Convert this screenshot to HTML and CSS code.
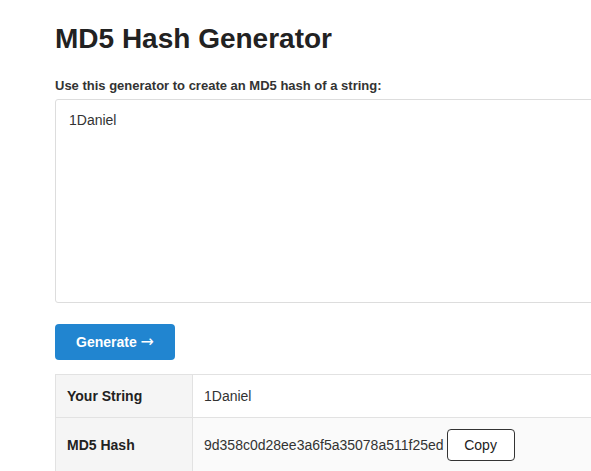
FILE: index.html
```html
<!DOCTYPE html>
<html>
<head>
<meta charset="utf-8">
<link rel="stylesheet" href="styles.css">
</head>
<body>
<div class="page">
  <h1 class="title">MD5 Hash Generator</h1>
  <label class="label" for="src">Use this generator to create an MD5 hash of a string:</label>
  <textarea id="src" class="input">1Daniel</textarea>
  <button class="generate">Generate <span class="arrow">→</span></button>
  <table class="result">
    <tr>
      <th>Your String</th>
      <td>1Daniel</td>
    </tr>
    <tr class="alt">
      <th>MD5 Hash</th>
      <td><span class="hash">9d358c0d28ee3a6f5a35078a511f25ed</span><button class="copy">Copy</button></td>
    </tr>
  </table>
</div>
</body>
</html>
```
FILE: styles.css
```css
html, body {
  margin: 0;
  padding: 0;
  background: #fff;
  overflow: hidden;
}
body {
  font-family: "Liberation Sans", Arial, sans-serif;
  color: #333;
}
.page {
  width: 700px;
  padding: 22px 0 0 55px;
}
.title {
  margin: 0;
  font-size: 28px;
  line-height: 34px;
  font-weight: bold;
  color: #222;
}
.label {
  display: block;
  margin-top: 21px;
  font-size: 13px;
  line-height: 18px;
  font-weight: bold;
  color: #333;
}
.input {
  display: block;
  box-sizing: border-box;
  width: 100%;
  height: 204px;
  margin-top: 4px;
  padding: 11px 13px;
  border: 1px solid #ddd;
  border-radius: 3px;
  font-family: "Liberation Sans", Arial, sans-serif;
  font-size: 14px;
  line-height: 18px;
  color: #333;
  resize: none;
  outline: none;
}
.generate {
  display: block;
  margin-top: 21px;
  width: 120px;
  height: 36px;
  border: 0;
  border-radius: 4px;
  background: #2185d0;
  color: #fff;
  font-family: "Liberation Sans", Arial, sans-serif;
  font-size: 14px;
  font-weight: bold;
  padding: 0;
}
.arrow {
  font-family: "DejaVu Sans", sans-serif;
  font-weight: normal;
  font-size: 16px;
  line-height: 1;
}
.result {
  margin-top: 14px;
  width: 100%;
  border-collapse: collapse;
  font-size: 14px;
}
.result th, .result td {
  border: 1px solid #e2e2e2;
  text-align: left;
  height: 42px;
  padding: 0 10px 0 11px;
}
.result td {
  padding-left: 11px;
  color: #333;
}
.result th {
  width: 115px;
  background: #f5f5f5;
  color: #222;
  font-weight: bold;
}
.result .alt td {
  background: #fafafa;
}
.result .alt th, .result .alt td {
  height: 54px;
}
.hash {
  vertical-align: middle;
}
.copy {
  vertical-align: middle;
  margin-left: 3px;
  width: 68px;
  height: 32px;
  background: #fff;
  border: 1px solid #333;
  border-radius: 4px;
  font-family: "Liberation Sans", Arial, sans-serif;
  font-size: 14px;
  color: #222;
  padding: 0;
}
```
